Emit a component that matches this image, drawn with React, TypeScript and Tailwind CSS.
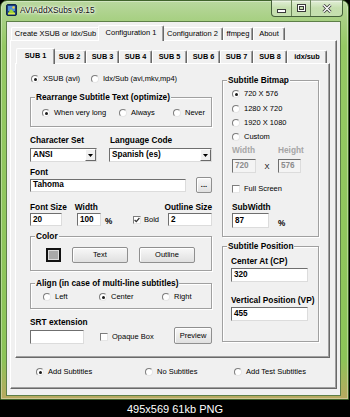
import React from "react";

type Kids = { children?: React.ReactNode; className?: string };

function Radio({ checked = false }: { checked?: boolean }) {
  return (
    <span className="flex items-center justify-center w-[8px] h-[8px] shrink-0 rounded-full border border-t-[#7d7d7d] border-l-[#7d7d7d] border-b-[#e6e6e6] border-r-[#e6e6e6] bg-white">
      {checked ? <span className="w-[3px] h-[3px] rounded-full bg-[#1a1a1a]" /> : null}
    </span>
  );
}

function RadioItem({ label, checked = false, className = "" }: { label: string; checked?: boolean; className?: string }) {
  return (
    <div className={`flex items-center gap-[4px] h-[10px] text-[7.5px] leading-[10px] whitespace-nowrap ${className}`}>
      <Radio checked={checked} />
      <span>{label}</span>
    </div>
  );
}

function Check({ checked = false }: { checked?: boolean }) {
  return (
    <span className="flex items-center justify-center w-[8px] h-[8px] shrink-0 border border-t-[#7d7d7d] border-l-[#7d7d7d] border-b-[#e6e6e6] border-r-[#e6e6e6] bg-white">
      {checked ? (
        <svg width="6" height="6" viewBox="0 0 6 6">
          <path d="M0.6 3 L2.3 4.7 L5.4 1" stroke="#333" strokeWidth="1.2" fill="none" />
        </svg>
      ) : null}
    </span>
  );
}

function TextBox({ value, className = "", disabled = false }: { value: string; className?: string; disabled?: boolean }) {
  return (
    <div
      className={`flex items-center pl-[2px] border border-t-[#6f6f6f] border-l-[#6f6f6f] border-b-[#dcdcdc] border-r-[#dcdcdc] text-[8.2px] font-bold leading-[10px] ${
        disabled ? "bg-[#f4f4f4] text-[#8c8c8c]" : "bg-white text-black"
      } ${className}`}
    >
      {value}
    </div>
  );
}

function Combo({ value, className = "" }: { value: string; className?: string }) {
  return (
    <div className={`flex items-center border border-t-[#6f6f6f] border-l-[#6f6f6f] border-b-[#dcdcdc] border-r-[#dcdcdc] bg-white ${className}`}>
      <span className="flex-1 pl-[2px] text-[8.2px] font-bold leading-[10px]">{value}</span>
      <span className="w-[11px] h-[12px] flex items-center justify-center bg-[#f0f0f0] border border-t-white border-l-white border-b-[#696969] border-r-[#696969]">
        <svg width="5" height="3" viewBox="0 0 5 3">
          <path d="M0 0H5L2.5 3Z" fill="#000" />
        </svg>
      </span>
    </div>
  );
}

function Btn({ label, className = "" }: { label: string; className?: string }) {
  return (
    <div
      className={`flex items-center justify-center rounded-[2px] border border-[#8f8f8f] bg-[linear-gradient(180deg,#f8f8f8,#e0e0e0)] text-[7.5px] leading-[10px] shadow-[inset_1px_1px_0_#fff] ${className}`}
    >
      {label}
    </div>
  );
}

function GroupBox({ label, className = "", children }: Kids & { label: string }) {
  return (
    <div className={`relative border border-[#a0a0a0] shadow-[inset_1px_1px_0_#fff,1px_1px_0_#fff] ${className}`}>
      <span className="absolute left-[4px] top-[-6px] bg-[#f0f0f0] px-[1px] text-[8.3px] font-bold leading-[10px] whitespace-nowrap">
        {label}
      </span>
      {children}
    </div>
  );
}

function Label({ children, className = "" }: Kids) {
  return <div className={`h-[10px] text-[8.3px] font-bold leading-[10px] whitespace-nowrap ${className}`}>{children}</div>;
}

function Tab({ label, selected = false, className = "", bold = false }: { label: string; selected?: boolean; className?: string; bold?: boolean }) {
  const base = `flex items-center justify-center shrink-0 rounded-t-[2px] bg-[#f0f0f0] border-l border-t border-r border-l-white border-t-white border-r-[#696969] shadow-[inset_-1px_0_0_#a0a0a0] whitespace-nowrap ${
    bold ? "text-[7.3px] font-bold" : "text-[7.5px]"
  } leading-[10px]`;
  return selected ? (
    <div className={`${base} relative z-10 h-[16px] -mb-[1px] -mx-[2px] pb-[1px] ${className}`}>{label}</div>
  ) : (
    <div className={`${base} h-[13px] ${className}`}>{label}</div>
  );
}

const raised =
  "border border-t-white border-l-white border-r-[#696969] border-b-[#696969] shadow-[inset_-1px_-1px_0_#a0a0a0]";

function TitleBar() {
  return (
    <div className="h-[21px] flex shrink-0">
      <div className="ml-[5px] mt-[3px] w-[11px] h-[12px]">
        <svg width="11" height="12" viewBox="0 0 11 12">
          <rect x="0.5" y="0.5" width="10" height="11" rx="1.5" fill="#1d3f7c" stroke="#0e2450" />
          <rect x="2" y="2" width="7" height="5" fill="#4f8fd6" />
          <path d="M2 9 L5 5 L9 9 Z" fill="#9fd33a" />
          <circle cx="7.5" cy="3.5" r="1.2" fill="#f3d23a" />
          <rect x="2" y="9" width="7" height="1.5" fill="#d9e84a" />
        </svg>
      </div>
      <div className="ml-[3px] mt-[4px] text-[8.3px] leading-[11px] text-[#111] [text-shadow:0_0_5px_#fff,0_0_3px_#fff,0_0_2px_#fff]">
        AVIAddXSubs v9.15
      </div>
      <div className="ml-auto mr-[5px] -mt-[1px] flex h-[17px] rounded-b-[4px] border border-t-0 border-[#45603a] overflow-hidden bg-[linear-gradient(180deg,rgba(255,255,255,0.6),rgba(255,255,255,0.25)_50%,rgba(225,238,215,0.5))]">
        <div className="w-[20px] flex items-end justify-center pb-[3px] border-r border-[#6b8659]">
          <svg width="9" height="4" viewBox="0 0 9 4">
            <rect x="0.5" y="0.5" width="8" height="3" fill="#fff" stroke="#3a3a3a" />
          </svg>
        </div>
        <div className="w-[19px] flex items-center justify-center border-r border-[#6b8659]">
          <svg width="9" height="8" viewBox="0 0 9 8">
            <rect x="0.5" y="0.5" width="8" height="7" fill="none" stroke="#3a3a3a" />
            <rect x="1.5" y="1.5" width="6" height="5" fill="none" stroke="#fff" />
            <rect x="2.5" y="2.5" width="4" height="3" fill="none" stroke="#3a3a3a" />
          </svg>
        </div>
        <div className="w-[31px] flex items-center justify-center">
          <svg width="10" height="9" viewBox="0 0 10 9">
            <path d="M1.5 1 L8.5 8 M8.5 1 L1.5 8" stroke="#3a3a3a" strokeWidth="3" />
            <path d="M1.5 1 L8.5 8 M8.5 1 L1.5 8" stroke="#fff" strokeWidth="1.4" />
          </svg>
        </div>
      </div>
    </div>
  );
}

export default function App() {
  return (
    <div className="w-[350px] h-[417px] bg-black overflow-hidden font-['Liberation_Sans',Arial,sans-serif] text-black">
      <div className="w-[349px] h-[400px] rounded-t-[7px] border border-[#40632b] bg-[linear-gradient(180deg,#b9d89f_0px,#a8d084_18px,#95c964_45px,#8cc458_90%,#b9a860_100%)] flex flex-col shadow-[inset_0_0_0_1px_rgba(255,255,255,0.35)]">
        <TitleBar />
        <div className="ml-[6px] w-[333px] h-[373px] bg-[#f0f0f0] shadow-[0_0_0_1px_#5d7f48] flex flex-col">
          <div className="ml-[3px] mt-[3px] w-[327px] flex flex-col">
            {/* main tabs */}
            <div className="h-[15px] flex items-end pl-[1px]">
              <Tab label="Create XSUB or Idx/Sub" className="w-[89px]" />
              <Tab label="Configuration 1" selected className="w-[66px]" />
              <Tab label="Configuration 2" className="w-[61px]" />
              <Tab label="ffmpeg" className="w-[30px]" />
              <Tab label="About" className="w-[32px]" />
            </div>
            {/* main page */}
            <div className={`h-[349px] ${raised} flex flex-col`}>
              <div className="ml-[4px] mt-[7px] w-[315px] flex flex-col">
                {/* sub tabs */}
                <div className="h-[15px] flex items-end pl-[3px]">
                  <Tab label="SUB 1" selected bold className="w-[39px]" />
                  <Tab label="SUB 2" bold className="w-[33px]" />
                  <Tab label="SUB 3" bold className="w-[33px]" />
                  <Tab label="SUB 4" bold className="w-[33px]" />
                  <Tab label="SUB 5" bold className="w-[35px]" />
                  <Tab label="SUB 6" bold className="w-[33px]" />
                  <Tab label="SUB 7" bold className="w-[33px]" />
                  <Tab label="SUB 8" bold className="w-[34px]" />
                  <Tab label="idx/sub" bold className="w-[40px]" />
                </div>
                {/* sub page */}
                <div className={`h-[295px] ${raised} flex`}>
                  {/* left column */}
                  <div className="ml-[14px] w-[182px] flex flex-col">
                    <div className="mt-[10px] h-[10px] flex items-center">
                      <RadioItem label="XSUB (avi)" checked className="ml-[1px] w-[60px]" />
                      <RadioItem label="Idx/Sub (avi,mkv,mp4)" />
                    </div>

                    <GroupBox label="Rearrange Subtitle Text (optimize)" className="mt-[13px] h-[30px]">
                      <div className="mt-[10px] h-[10px] flex items-center pl-[11px]">
                        <RadioItem label="When very long" checked className="w-[77px]" />
                        <RadioItem label="Always" className="w-[54px]" />
                        <RadioItem label="Never" />
                      </div>
                    </GroupBox>

                    <div className="mt-[8px] flex">
                      <Label className="w-[80px]">Character Set</Label>
                      <Label>Language Code</Label>
                    </div>
                    <div className="mt-[3px] h-[14px] flex">
                      <Combo value="ANSI" className="w-[67px] h-[14px]" />
                      <Combo value="Spanish (es)" className="ml-[12px] w-[103px] h-[14px]" />
                    </div>

                    <Label className="mt-[5px]">Font</Label>
                    <div className="h-[16px] flex items-center">
                      <TextBox value="Tahoma" className="w-[156px] h-[13px]" />
                      <Btn label="..." className="ml-[10px] w-[16px] h-[16px] font-bold" />
                    </div>

                    <div className="mt-[9px] flex">
                      <Label className="w-[46px]">Font Size</Label>
                      <Label className="w-[92px]">Width</Label>
                      <Label>Outline Size</Label>
                    </div>
                    <div className="mt-[1px] h-[13px] flex items-center">
                      <div className="w-[47px]">
                        <TextBox value="20" className="w-[32px] h-[13px]" />
                      </div>
                      <div className="w-[56px] flex items-end">
                        <TextBox value="100" className="w-[24px] h-[13px]" />
                        <span className="ml-[4px] text-[8.2px] font-bold leading-[9px]">%</span>
                      </div>
                      <div className="w-[35px] flex items-center gap-[3px] text-[7.5px] leading-[10px]">
                        <Check checked />
                        <span>Bold</span>
                      </div>
                      <TextBox value="2" className="w-[44px] h-[13px]" />
                    </div>

                    <GroupBox label="Color" className="mt-[10px] h-[35px]">
                      <div className="mt-[10px] h-[16px] flex items-center">
                        <div className="ml-[15px] w-[15px] h-[14px] border-2 border-[#111] bg-[#a9a9a9] shadow-[inset_0_0_0_1px_#dcdcdc]" />
                        <Btn label="Text" className="ml-[11px] w-[56px] h-[16px]" />
                        <Btn label="Outline" className="ml-[11px] w-[56px] h-[16px]" />
                      </div>
                    </GroupBox>

                    <GroupBox label="Align (in case of multi-line subtitles)" className="mt-[12px] h-[26px]">
                      <div className="mt-[8px] h-[10px] flex items-center pl-[12px]">
                        <RadioItem label="Left" className="w-[56px]" />
                        <RadioItem label="Center" checked className="w-[63px]" />
                        <RadioItem label="Right" />
                      </div>
                    </GroupBox>

                    <Label className="mt-[8px]">SRT extension</Label>
                    <div className="h-[17px] flex items-center">
                      <TextBox value="" className="w-[54px] h-[14px] self-end" />
                      <div className="ml-[16px] flex items-center gap-[4px] text-[7.5px] leading-[10px] mt-[2px]">
                        <Check />
                        <span>Opaque Box</span>
                      </div>
                      <Btn label="Preview" className="ml-auto w-[38px] h-[17px]" />
                    </div>
                  </div>

                  {/* right column */}
                  <div className="ml-[10px] w-[97px] flex flex-col">
                    <GroupBox label="Subtitle Bitmap" className="mt-[16px] h-[157px]">
                      <div className="pl-[9px] flex flex-col">
                        <RadioItem label="720 X 576" checked className="mt-[8px]" />
                        <RadioItem label="1280 X 720" className="mt-[5px]" />
                        <RadioItem label="1920 X 1080" className="mt-[4px]" />
                        <RadioItem label="Custom" className="mt-[4px]" />
                        <div className="mt-[3px] flex text-[#a6a6a6]">
                          <Label className="w-[46px]">Width</Label>
                          <Label>Height</Label>
                        </div>
                        <div className="mt-[4px] h-[14px] flex items-center">
                          <TextBox value="720" disabled className="w-[24px] h-[14px]" />
                          <span className="w-[22px] text-center text-[7.5px] leading-[10px] mt-[2px]">X</span>
                          <TextBox value="576" disabled className="w-[23px] h-[14px]" />
                        </div>
                        <div className="mt-[11px] h-[10px] flex items-center gap-[4px] text-[7.5px] leading-[10px]">
                          <Check />
                          <span>Full Screen</span>
                        </div>
                        <Label className="mt-[8px]">SubWidth</Label>
                        <div className="mt-[1px] h-[15px] flex items-end">
                          <TextBox value="87" className="w-[37px] h-[15px]" />
                          <span className="ml-[9px] text-[8.2px] font-bold leading-[9px]">%</span>
                        </div>
                      </div>
                    </GroupBox>

                    <GroupBox label="Subtitle Position" className="mt-[9px] h-[96px]">
                      <div className="pl-[8px] flex flex-col">
                        <Label className="mt-[9px]">Center At (CP)</Label>
                        <TextBox value="320" className="mt-[2px] w-[77px] h-[14px]" />
                        <Label className="mt-[13px]">Vertical Position (VP)</Label>
                        <TextBox value="455" className="mt-[2px] w-[77px] h-[14px]" />
                      </div>
                    </GroupBox>
                  </div>
                </div>
              </div>

              {/* bottom radios */}
              <div className="mt-[9px] ml-[25px] h-[10px] flex items-center">
                <RadioItem label="Add Subtitles" checked className="w-[109px]" />
                <RadioItem label="No Subtitles" className="w-[89px]" />
                <RadioItem label="Add Test Subtitles" />
              </div>
            </div>
          </div>
        </div>
      </div>
      <div className="h-[17px] pt-[1px] text-center text-[11px] leading-[16px] text-white">495x569 61kb PNG</div>
    </div>
  );
}
